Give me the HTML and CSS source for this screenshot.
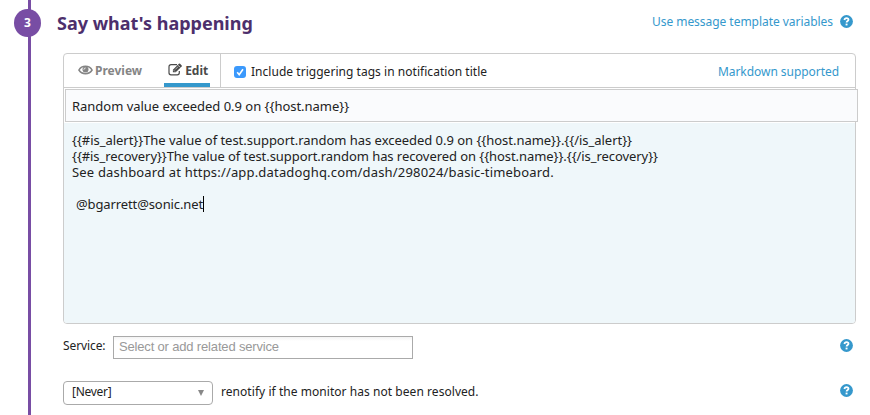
FILE: index.html
```html
<!DOCTYPE html>
<html lang="en">
<head>
<meta charset="utf-8">
<title>Say what's happening</title>
<link rel="stylesheet" href="styles.css">
</head>
<body>
<svg class="defs" width="0" height="0">
  <symbol id="help" viewBox="0 0 13 13">
    <circle cx="6.5" cy="6.5" r="6.4" fill="#3598cc"/>
    <path d="M4.400 5C4.600 3.700 5.400 3.100 6.500 3.100c1.200 0 2 .7 2 1.600 0 1.400-1.900 1.300-1.900 2.900" fill="none" stroke="#fff" stroke-width="1.800"/>
    <rect x="5.600" y="8.600" width="1.900" height="1.800" fill="#fff"/>
  </symbol>
</svg>
<section class="step">
  <div class="rail"><div class="badge">3</div></div>
  <div class="content">
    <header class="heading">
      <h2>Say what's happening</h2>
      <a class="link vars">Use message template variables</a>
      <svg class="help"><use href="#help"/></svg>
    </header>
    <div class="editor">
      <div class="toolbar">
        <div class="tabs">
          <div class="tab">
            <svg class="eye" viewBox="0 0 15 10"><path d="M.9 5C2.300 2.500 4.700 1.200 7.500 1.200s5.200 1.300 6.600 3.800C12.700 7.400 10.300 8.700 7.500 8.700S2.300 7.400.9 5z" fill="none" stroke="#858585" stroke-width="1.500"/><circle cx="7.500" cy="4.600" r="3" fill="#858585"/><path d="M5.900 4.700c0-1.100.6-1.700 1.700-1.700" fill="none" stroke="#fff" stroke-width=".9"/></svg>
            <span>Preview</span>
          </div>
          <div class="tab active">
            <svg class="pencil" viewBox="0 0 15 13"><path d="M9 1.700H3A2 2 0 0 0 1 3.700v6.100a2 2 0 0 0 2 2h6.300a2 2 0 0 0 2-2V8" fill="none" stroke="#4a4a4a" stroke-width="1.200"/><path d="M4.900 9.300V6.700L10.900.8q.6-.6 1.200 0l1.600 1.600q.6.6 0 1.200L7.700 9.300z" fill="#4a4a4a"/><path d="M10.200 2.200l2.200 2.200M5.700 7.200l1.400 1.400M7.200 6.500l3-3" stroke="#fff" stroke-width=".6"/></svg>
            <span>Edit</span>
          </div>
        </div>
        <label class="include"><span class="check"><svg viewBox="0 0 12 12"><path d="M3.200 6.300l2 2.400L9 3.300" fill="none" stroke="#fff" stroke-width="1.600"/></svg></span>Include triggering tags in notification title</label>
        <a class="link markdown">Markdown supported</a>
      </div>
      <div class="subject">Random value exceeded 0.9 on {{host.name}}</div>
      <div class="message">
        <div class="alert">{{#is_alert}}The value of test.support.random has exceeded 0.9 on {{host.name}}.{{/is_alert}}</div>
        <div class="recovery">{{#is_recovery}}The value of test.support.random has recovered on {{host.name}}.{{/is_recovery}}</div>
        <div class="dashboard">See dashboard at https://app.datadoghq.com/dash/298024/basic-timeboard.</div>
        <div></div>
        <div class="mention">@bgarrett@sonic.net<i class="caret"></i></div>
      </div>
    </div>
    <div class="row service">
      <span class="label">Service:</span>
      <div class="service-input">Select or add related service</div>
      <svg class="help"><use href="#help"/></svg>
    </div>
    <div class="row renotify">
      <div class="select"><span>[Never]</span><i class="arrow"></i></div>
      <span class="note">renotify if the monitor has not been resolved.</span>
      <svg class="help"><use href="#help"/></svg>
    </div>
  </div>
</section>
</body>
</html>
```
FILE: styles.css
```css
* { box-sizing: border-box; }
body { margin: 0; background: #fff; color: #222; font: 12px/16px "Noto Sans", sans-serif; overflow: hidden; }
.defs { position: absolute; }
.step { display: flex; height: 415px; }
.rail { flex: none; width: 57px; padding: 9px 0 0 14px; background: linear-gradient(#784da4, #784da4) 28px 0 / 3px 100% no-repeat; }
.badge { width: 27px; height: 28px; border-radius: 50%; background: #784da4; color: #fff; font-weight: 700; font-size: 12px; line-height: 28px; text-align: center; }
.content { flex: none; width: 799px; padding-left: 6px; }
.heading { display: flex; align-items: center; height: 53px; margin-left: -6px; padding: 0 3px 10px 0; }
h2 { margin: 3px auto 0 0; font-size: 18px; line-height: 26px; color: #4d2f6c; }
.link { color: #3598cc; white-space: nowrap; }
.vars { letter-spacing: -.04px; margin-top: 1px; }
.help { display: block; flex: none; width: 13px; height: 13px; margin: 0 0 1px 7px; }
.editor { height: 271px; border: 1px solid #ccc; border-radius: 4px; background: #fff; display: flex; flex-direction: column; }
.toolbar { display: flex; align-items: stretch; height: 34px; border-bottom: 1px solid #ccc; padding-right: 16px; flex: none; }
.tabs { display: flex; width: 157px; border-right: 1px solid #ccc; padding-left: 14px; }
.tab { display: flex; align-items: center; font-weight: 700; color: #858585; height: 33px; }
.tab.active { margin-left: 22px; width: 46px; padding-left: 4px; color: #4a4a4a; border-bottom: 4px solid #3598cc; padding-top: 4px; }
.eye { width: 15px; height: 10px; margin: 0 2px 2px 0; }
.pencil { width: 15px; height: 13px; margin: 0 2px 2px 0; }
.include { display: flex; align-items: center; margin-right: auto; padding-left: 13px; padding-top: 3px; letter-spacing: .035px; }
.check { width: 12px; height: 12px; border-radius: 3px; background: #3b99fc; margin-right: 5px; display: flex; }
.markdown { align-self: center; margin-top: 3px; letter-spacing: -.05px; }
.subject { flex: none; width: 793px; height: 33px; margin: 1px 0 0 1px; border: 1px solid #ccc; background: #fafbfd; padding: 8px 6px; font-size: 13px; letter-spacing: -.02px; white-space: nowrap; }
.message { flex: 1; margin-top: 1px; padding: 9px 8px; background: #eff7fa; border-radius: 0 0 3px 3px; font-size: 13px; white-space: nowrap; }
.message > div { height: 16px; }
.alert { letter-spacing: -.03px; }
.recovery { letter-spacing: -.065px; }
.dashboard { letter-spacing: .175px; }
.mention { display: flex; padding-left: 4px; letter-spacing: -.11px; }
.caret { width: 1px; height: 16px; background: #000; }
.row { display: flex; align-items: center; padding-right: 3px; }
.row .help { margin: 0 0 5px auto; }
.service { margin-top: 12px; height: 23px; }
.label { letter-spacing: -.1px; margin-bottom: 3px; }
.service-input { width: 300px; height: 23px; margin-left: 7.5px; border: 1px solid #aaa; background: linear-gradient(#f3f3f3, #fff 4px); font: 13px/19px "Liberation Sans", sans-serif; color: #999; padding-left: 5px; letter-spacing: -.165px; }
.renotify { margin-top: 22px; height: 24px; }
.select { display: flex; align-items: center; width: 150px; height: 24px; border: 1px solid #aaa; border-radius: 4px; padding: 0 8px 2px; margin-right: 8px; letter-spacing: -.27px; }
.arrow { margin: 1px 0 0 auto; border: 3px solid transparent; border-top: 6px solid #888; border-bottom: 0; }
.note { letter-spacing: .05px; margin-bottom: 2px; }
```
